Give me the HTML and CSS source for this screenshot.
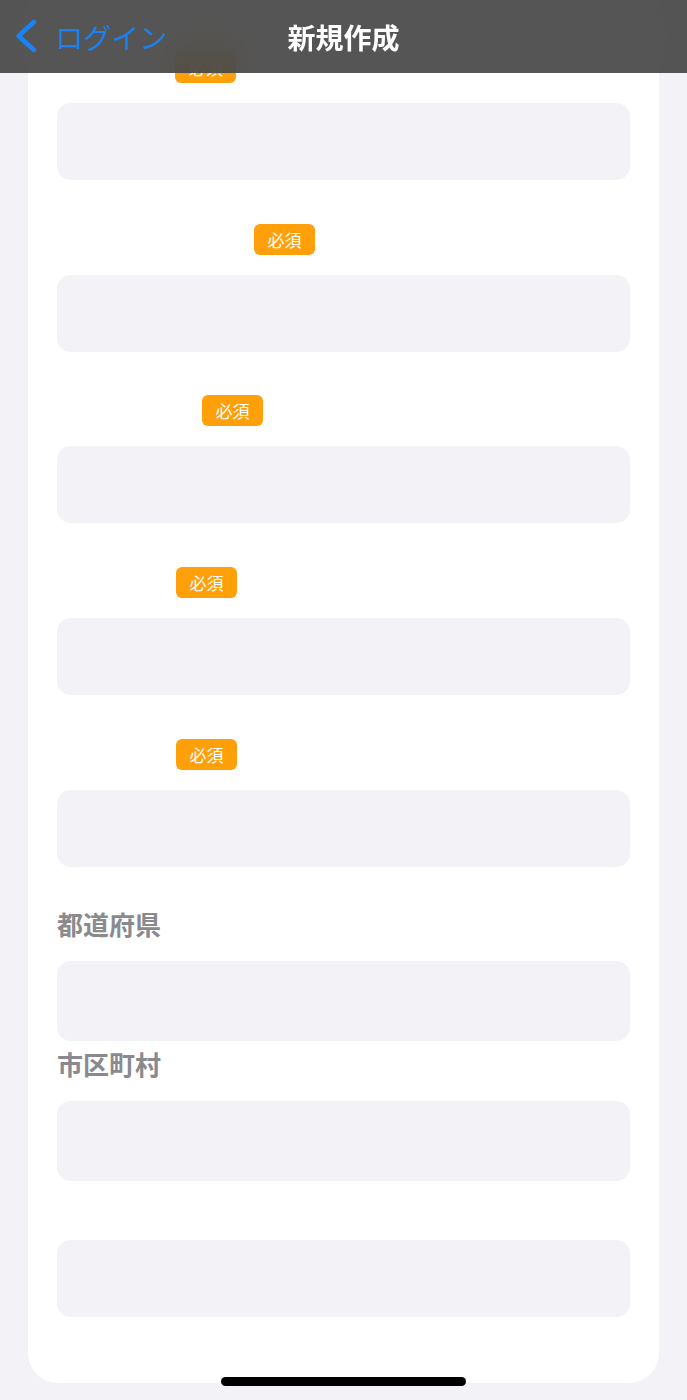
FILE: index.html
```html
<!DOCTYPE html>
<html>
<head>
	<meta charset="utf-8">
	<link rel="stylesheet" href="styles.css">
	<title>新規作成</title>
</head>
<body>
	<div id="navBar">
		<div class="navBack">
			<svg class="chevron" width="26" height="40" viewBox="0 0 26 40">
				<polyline points="21,5 5.5,19 21,33" fill="none" stroke="#1a82f7" stroke-width="4.5" stroke-linecap="round" stroke-linejoin="round"/>
			</svg>
			<span class="navBackText">ログイン</span>
		</div>
		<div class="navTitle">新規作成</div>
		<div></div>
	</div>

	<div id="formCard">
		<div class="group first">
			<div class="labelRow"><span class="label hidden">ユーザ名</span><span class="badge">必須</span></div>
			<div class="field"></div>
		</div>
		<div class="group">
			<div class="labelRow"><span class="label hidden">メールアドレス</span><span class="badge">必須</span></div>
			<div class="field"></div>
		</div>
		<div class="group">
			<div class="labelRow"><span class="label hidden">パスワード</span><span class="badge">必須</span></div>
			<div class="field"></div>
		</div>
		<div class="group">
			<div class="labelRow"><span class="label hidden">電話番号</span><span class="badge">必須</span></div>
			<div class="field"></div>
		</div>
		<div class="group">
			<div class="labelRow"><span class="label hidden">郵便番号</span><span class="badge">必須</span></div>
			<div class="field"></div>
		</div>
		<div class="group">
			<div class="labelRow"><span class="label">都道府県</span></div>
			<div class="field tall"></div>
		</div>
		<div class="group near">
			<div class="labelRow"><span class="label">市区町村</span></div>
			<div class="field tall"></div>
		</div>
		<div class="group near">
			<div class="labelRow"></div>
			<div class="field"></div>
		</div>
	</div>

	<div id="homeIndicator"></div>
</body>
</html>
```

FILE: styles.css
```css
html, body{
	margin: 0;
	padding: 0;
}
body{
	background-color: #f2f2f7;
	font-family: "Noto Sans CJK JP", "Noto Sans", sans-serif;
	height: 1400px;
	overflow: hidden;
}

/* top navigation, sits over the scrolled form */
#navBar{
	position: fixed;
	top: 0;
	left: 0;
	right: 0;
	height: 73px;
	display: grid;
	grid-template-columns: 1fr auto 1fr;
	align-items: center;
	background-color: rgba(66,66,66,.9);
	backdrop-filter: blur(18px);
	z-index: 10;
}
.navBack{
	display: flex;
	align-items: center;
	padding-left: 13px;
}
.chevron{
	display: block;
}
.navBackText{
	color: #1a82f7;
	font-size: 28px;
	margin-left: 16px;
	line-height: 1;
}
.navTitle{
	color: white;
	font-size: 28px;
	font-weight: bold;
	line-height: 1;
}

#formCard{
	margin: 0 28px;
	padding: 52px 29px 66px 29px;
	background-color: white;
	border-radius: 0 0 30px 30px;
}
.group{
	margin-top: 43.7px;
}
.group.first{
	margin-top: 0;
}
.group.near{
	margin-top: 8.5px;
}
.labelRow{
	height: 31px;
	display: flex;
	align-items: center;
	gap: 15px;
	margin-bottom: 20px;
}
.label{
	font-size: 26px;
	font-weight: bold;
	color: #8a8a8e;
	line-height: 31px;
	margin-top: -4px;
}
.label.hidden{
	visibility: hidden;
}
.badge{
	width: 61px;
	height: 31px;
	border-radius: 6px;
	background-color: #ff9f0a;
	color: white;
	font-size: 17px;
	line-height: 31px;
	text-align: center;
}
.field{
	height: 77px;
	border-radius: 14px;
	background-color: #f2f2f7;
}
.field.tall{
	height: 80px;
}

#homeIndicator{
	position: fixed;
	left: 221px;
	width: 245px;
	bottom: 14px;
	height: 9px;
	border-radius: 5px;
	background-color: black;
	z-index: 10;
}
```
